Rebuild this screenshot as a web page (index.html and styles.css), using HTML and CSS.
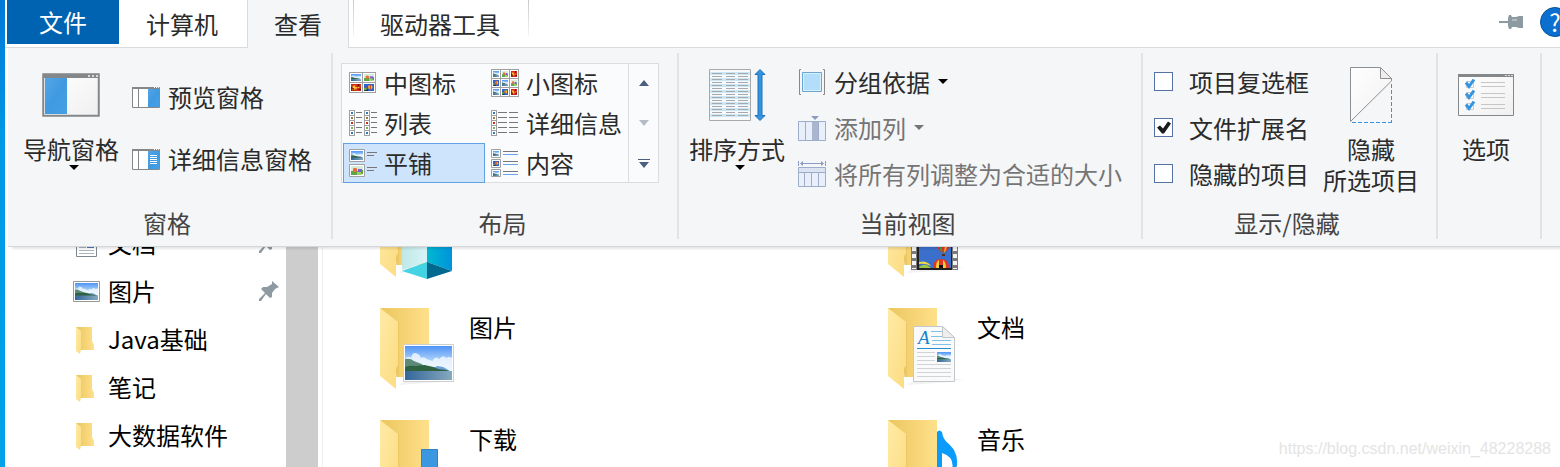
FILE: index.html
```
<!DOCTYPE html>
<html lang="zh-CN">
<head>
<meta charset="utf-8">
<title>文件资源管理器</title>
<link rel="stylesheet" href="styles.css">
</head>
<body>
<svg class="defs" aria-hidden="true">
  <defs>
    <linearGradient id="sky" x1="0" y1="0" x2="0" y2="1"><stop offset="0" stop-color="#4f94f5"/><stop offset=".6" stop-color="#d3ebfc"/><stop offset="1" stop-color="#e8f5fc"/></linearGradient>
    <linearGradient id="sea" x1="0" y1="0" x2="1" y2="0"><stop offset="0" stop-color="#34669b"/><stop offset="1" stop-color="#86a9bd"/></linearGradient>
    <linearGradient id="blue" x1="0" y1="0" x2="1" y2="1"><stop offset="0" stop-color="#55a5e6"/><stop offset=".5" stop-color="#3f9ae1"/><stop offset="1" stop-color="#47a0e5"/></linearGradient>
    <linearGradient id="paper" x1="0" y1="0" x2="1" y2="1"><stop offset="0" stop-color="#fff"/><stop offset="1" stop-color="#f0f0f0"/></linearGradient>
    <linearGradient id="back" x1="0" y1="0" x2="1" y2="0"><stop offset="0" stop-color="#ebc65f"/><stop offset="1" stop-color="#ffe08a"/></linearGradient>
    <linearGradient id="front" x1="0" y1="0" x2="1" y2="1"><stop offset="0" stop-color="#ffeaa6"/><stop offset="1" stop-color="#fbdc80"/></linearGradient>
    <linearGradient id="cubeR" x1="0" y1="0" x2="1" y2="0"><stop offset="0" stop-color="#00b8cf"/><stop offset="1" stop-color="#0093dc"/></linearGradient>
    <linearGradient id="cubeL" x1="0" y1="0" x2="1" y2="0"><stop offset="0" stop-color="#bfe9e6"/><stop offset="1" stop-color="#d8f3f8"/></linearGradient>
    <symbol id="photo" viewBox="0 0 48 34" preserveAspectRatio="none">
      <path fill="url(#sky)" d="M0 0h48v34H0z"/>
      <path fill="#eef7fe" d="M0 13q3-4 6-1 2-7 7-4 3 1 3 4 4-2 6 1 3 1 6 2 3-6 7-2 4-5 7-1 3-2 6 0v13H0z" opacity=".85"/>
      <path fill="#6b9fd8" d="M24 24l9-4 6 1 7 4z"/>
      <path fill="#5c8a78" d="M0 13q6-1 9 2l8 3 5 4 8 3H0z"/>
      <path fill="#2f6240" d="M0 21q6-2 11-1l9-1 9 2 5 2 8 1 6 2H0z"/>
      <path fill="url(#sea)" d="M0 25h48v9H0z"/>
    </symbol>
    <symbol id="flower" viewBox="0 0 12 9" preserveAspectRatio="none">
      <path fill="#d8ecdc" d="M0 0h12v9H0z"/><path fill="#5aa845" d="M0 5h7v4H0zM9 4h3v4H9z"/><circle cx="4" cy="4" r="2.2" fill="#ef6a35"/><path fill="#7a62cf" d="M7 3h4v3H7z"/><path fill="#9bd169" d="M6 6h4v3H6z"/>
    </symbol>
    <symbol id="leaf" viewBox="0 0 12 9" preserveAspectRatio="none">
      <path fill="#d3301b" d="M0 0h12v9H0z"/><path fill="#7c0f09" d="M0 4h2v2h2v3H0zM8 0h2v3H8zM9 6h3v2H9z"/><path fill="#ffc934" d="M3 2h2v2h2v2H5v2H4V5H2V3h1zM8 4h2v1H8zM1 7h2v1H1z"/>
    </symbol>
    <symbol id="balloon" viewBox="0 0 12 9" preserveAspectRatio="none">
      <path fill="#2e62cf" d="M0 0h12v9H0z"/><path fill="#13234c" d="M0 7h5v2H0z"/><circle cx="7.5" cy="4" r="2.8" fill="#f3b92b"/><path fill="#cf2a1d" d="M7 1h1v6H7zM3 4h2v2H3z"/><path fill="#6cae31" d="M0 5h3v3H0z"/>
    </symbol>
    <symbol id="folder" viewBox="0 0 80 84">
      <path d="M18 78l12-6h46l-12 3z" fill="#000" opacity=".05"/>
      <path fill="url(#back)" d="M0 1h49v69H17z"/>
      <path fill="#e5be58" d="M18 16v43l-2 3v8h3V16z" opacity=".5"/>
      <path fill="url(#front)" d="M0 1l18 14v43l-2 3v21L0 69z"/>
    </symbol>
    <symbol id="small-folder" viewBox="0 0 28 28">
      <path fill="url(#back)" d="M4 1h16v14l2 4v5H8z"/>
      <path fill="url(#front)" d="M4 1l5 4v18l-1 5-4-3z"/>
    </symbol>
    <symbol id="pin" viewBox="0 0 20 20"><path fill="#8e9aa2" d="M13 0l7 6-2 1-2 1-3 4 0 4-2 1-4-4-5 7-2 0 0-2 6-6-4-4 2-2h4l5-3z"/></symbol>
    <symbol id="down" viewBox="0 0 10 5"><path d="M0 0h10L5 5z" fill="currentColor"/></symbol>
  </defs>
</svg>
<div class="desktop"></div>
<div class="window">
  <nav class="tabs">
    <button class="tab tab-file">文件</button>
    <button class="tab">计算机</button>
    <button class="tab tab-active">查看</button>
    <button class="tab tab-tools">驱动器工具</button>
    <div class="tab-actions">
      <button class="plain" aria-label="固定功能区"><svg width="24" height="14" viewBox="0 0 24 14"><path fill="#8e9aa2" d="M0 6h9V3l1-3h2l1 2h4l3-1h4v12h-4l-3-1h-4l-1 2h-2l-1-3V8H0z"/><path fill="#b4bcc1" d="M13 4h5v2h-5z"/></svg></button>
      <button class="help" aria-label="帮助">?</button>
    </div>
  </nav>

  <section class="ribbon">
    <div class="group pane-group">
      <div class="group-body">
        <button class="big">
          <span class="big-icon"><svg width="58" height="44" viewBox="0 0 58 44"><path fill="#fff" stroke="#aaa" d="M.5.5h57v43H.5z"/><path fill="url(#paper)" stroke="#85888b" stroke-width="1.5" d="M1.5 1.5h55v41h-55z"/><path fill="#85888b" d="M1 1h56v4H1z"/><path fill="#d9dadb" d="M46 2h2v2h-2zM50 2h2v2h-2zM54 2h2v2h-2z"/><path fill="url(#blue)" d="M3 5h22v36H3z"/></svg></span>
          <span class="big-label">导航窗格</span>
          <svg class="big-arrow" width="10" height="5"><use href="#down"/></svg>
        </button>
        <div class="rows rows-tall">
          <button class="row"><svg width="28" height="21" viewBox="0 0 28 21"><path fill="#fff" stroke="#85888b" d="M.5.5h27v20H.5z"/><path fill="#85888b" d="M0 0h28v2H0zM6 2h1v18H6z"/><path fill="#fff" d="M22 0h1v1h-1zM24 0h1v1h-1zM26 0h1v1h-1z"/><path fill="url(#blue)" d="M16 2h11v18H16z"/></svg>预览窗格</button>
          <button class="row"><svg width="28" height="21" viewBox="0 0 28 21"><path fill="#fff" stroke="#85888b" d="M.5.5h27v20H.5z"/><path fill="#85888b" d="M0 0h28v2H0zM6 2h1v18H6z"/><path fill="#fff" d="M22 0h1v1h-1zM24 0h1v1h-1zM26 0h1v1h-1z"/><path fill="url(#blue)" d="M16 2h11v18H16z"/><path fill="#fff" d="M18 6h7v1h-7zM18 8h7v1h-7zM18 10h7v1h-7zM18 12h7v1h-7zM18 14h7v1h-7z"/></svg>详细信息窗格</button>
        </div>
      </div>
      <div class="group-name">窗格</div>
    </div>

    <div class="group layout-group">
      <div class="group-body">
        <div class="gallery">
          <div class="gallery-list">
            <button class="view"><svg width="28" height="28" viewBox="0 0 28 28"><path fill="#a0a0a0" d="M0 3h27v21H0z"/><path fill="#fff" d="M1 4h12v9H1zM14 4h12v9H14zM1 14h12v9H1zM14 14h12v9H14z"/><use href="#photo" x="2" y="5" width="10" height="7"/><use href="#flower" x="15" y="5" width="10" height="7"/><use href="#leaf" x="2" y="15" width="10" height="7"/><use href="#balloon" x="15" y="15" width="10" height="7"/></svg>中图标</button>
            <button class="view"><svg width="28" height="28" viewBox="0 0 28 28"><path fill="#a0a0a0" d="M0 0h28v28H0z"/><path fill="#fff" d="M1 1h8v8H1zM10 1h8v8h-8zM19 1h8v8h-8zM1 10h8v8H1zM10 10h8v8h-8zM19 10h8v8h-8zM1 19h8v8H1zM10 19h8v8h-8zM19 19h8v8h-8z"/><use href="#photo" x="2" y="2" width="6" height="6"/><use href="#flower" x="11" y="2" width="6" height="6"/><use href="#leaf" x="20" y="2" width="6" height="6"/><use href="#balloon" x="2" y="11" width="6" height="6"/><use href="#photo" x="11" y="11" width="6" height="6"/><use href="#flower" x="20" y="11" width="6" height="6"/><use href="#photo" x="2" y="20" width="6" height="6"/><use href="#balloon" x="11" y="20" width="6" height="6"/><use href="#leaf" x="20" y="20" width="6" height="6"/></svg>小图标</button>
            <button class="view"><svg width="28" height="28" viewBox="0 0 28 28"><path fill="#a0a0a0" d="M0 1h6v26H0zM15 1h6v26h-6z"/><path fill="#fff" d="M1 2h4v4H1zM1 7h4v4H1zM1 12h4v4H1zM1 17h4v4H1zM1 22h4v4H1zM16 2h4v4h-4zM16 7h4v4h-4zM16 12h4v4h-4zM16 17h4v4h-4zM16 22h4v4h-4z"/><path fill="#347bb5" d="M2 3h2v2H2zM2 23h2v2H2zM17 3h2v2h-2zM17 23h2v2h-2z"/><path fill="#9c7b3e" d="M2 8h2v2H2zM17 8h2v2h-2z"/><path fill="#c9301b" d="M2 13h2v2H2zM17 13h2v2h-2z"/><path fill="#85a967" d="M2 18h2v2H2zM17 18h2v2h-2z"/><path fill="#777" d="M7 3h6v1H7zM7 8h6v1H7zM7 13h6v1H7zM7 18h6v1H7zM7 23h6v1H7zM22 3h6v1h-6zM22 8h6v1h-6zM22 13h6v1h-6zM22 18h6v1h-6zM22 23h6v1h-6z"/></svg>列表</button>
            <button class="view"><svg width="28" height="28" viewBox="0 0 28 28"><path fill="#a0a0a0" d="M0 1h6v26H0z"/><path fill="#fff" d="M1 2h4v4H1zM1 7h4v4H1zM1 12h4v4H1zM1 17h4v4H1zM1 22h4v4H1z"/><path fill="#347bb5" d="M2 3h2v2H2zM2 23h2v2H2z"/><path fill="#9c7b3e" d="M2 8h2v2H2z"/><path fill="#c9301b" d="M2 13h2v2H2z"/><path fill="#85a967" d="M2 18h2v2H2z"/><path fill="#777" d="M7 3h9v1H7zM7 8h9v1H7zM7 13h9v1H7zM7 18h9v1H7zM7 23h9v1H7zM18 3h9v1h-9zM18 8h9v1h-9zM18 13h9v1h-9zM18 18h9v1h-9zM18 23h9v1h-9z"/></svg>详细信息</button>
            <button class="view view-selected" aria-pressed="true"><svg width="28" height="28" viewBox="0 0 28 28"><path fill="#fff" stroke="#a0a0a0" d="M.5.5h15v12H.5zM.5 15.500h15v12H.5z"/><use href="#photo" x="2" y="2" width="12" height="9"/><use href="#flower" x="2" y="17" width="12" height="9"/><path fill="#777" d="M18 3h10v1H18zM18 6h7v1h-7zM18 18h10v1H18zM18 21h7v1h-7z"/></svg>平铺</button>
            <button class="view"><svg width="28" height="28" viewBox="0 0 28 28"><path fill="#fff" stroke="#a0a0a0" d="M.5.5h9v8H.5zM.5 10.500h9v8H.5zM.5 20.500h9v7H.5z"/><use href="#photo" x="2" y="2" width="6" height="5"/><use href="#balloon" x="2" y="12" width="6" height="5"/><use href="#photo" x="2" y="22" width="6" height="5"/><path fill="#777" d="M12 2h15v1H12zM12 12h15v1H12zM12 22h15v1H12z"/><path fill="#6ba2e8" d="M12 5h15v1H12zM12 15h15v1H12zM12 25h15v1H12z"/></svg>内容</button>
          </div>
          <div class="gallery-scroll">
            <button class="plain" aria-label="上一行"><svg width="10" height="6"><path fill="#4b5f80" d="M0 6h10L5 0z"/></svg></button>
            <button class="plain" aria-label="下一行" disabled><svg width="10" height="6"><path fill="#b5bcc6" d="M0 0h10L5 6z"/></svg></button>
            <button class="plain" aria-label="更多"><svg width="12" height="9"><path fill="#4b5f80" d="M0 0h12v1H0zM1 3h10L6 9z"/></svg></button>
          </div>
        </div>
      </div>
      <div class="group-name">布局</div>
    </div>

    <div class="group current-group">
      <div class="group-body">
        <button class="big">
          <span class="big-icon"><svg width="58" height="54" viewBox="0 0 58 54"><path fill="#f7f9fa" stroke="#a9a9a9" d="M1.500 1.500h41v51h-41z"/><path fill="#cbe7f5" d="M2 4h40v3H2zM2 10h40v3H2zM2 16h40v3H2zM2 22h40v3H2zM2 28h40v3H2zM2 34h40v3H2zM2 40h40v3H2zM2 46h40v3H2z"/><path fill="none" stroke="#a9a9ab" stroke-dasharray="10 4 9 3 10 9" d="M4 5.500h36M4 8.500h36M4 11.500h36M4 14.500h36M4 17.500h36M4 20.500h36M4 23.500h36M4 26.500h36M4 29.500h36M4 32.500h36M4 35.500h36M4 38.500h36M4 41.500h36M4 44.500h36M4 47.500h36"/><path fill="#3395e2" stroke="#2371b5" d="M52 1.500l5 5h-3v41h3l-5 5-5-5h3v-41h-3z"/></svg></span>
          <span class="big-label">排序方式</span>
          <svg class="big-arrow" width="10" height="5"><use href="#down"/></svg>
        </button>
        <div class="rows">
          <button class="row"><svg width="28" height="28" viewBox="0 0 28 28"><path fill="none" stroke="#888" d="M3 1.500H1.500v25H3M25 1.500h1.500v25H25"/><path fill="#b3defb" stroke="#6ca6d3" d="M4.500 4.500h19v19h-19z"/><path fill="none" stroke="#d8effd" d="M5.500 5.500h17v17h-17z"/></svg>分组依据<svg class="row-arrow" width="10" height="5"><use href="#down"/></svg></button>
          <button class="row" disabled><svg width="28" height="28" viewBox="0 0 28 28"><path fill="#e9effa" stroke="#9eadca" d="M.5 7.500h27v19H.5zM7.500 7.500v19M14.500 7.500v19M20.500 7.500v19"/><path fill="#a9b6ce" d="M14 8h6v18h-6z"/><path fill="#8b9cc2" d="M13 2h8l-4 4z"/></svg>添加列<svg class="row-arrow" width="10" height="5"><use href="#down"/></svg></button>
          <button class="row" disabled><svg width="28" height="28" viewBox="0 0 28 28"><path fill="#e9effa" stroke="#9eadca" d="M.5 7.500h27v19H.5zM.5 12.500h27M6.500 12.500v14M13.500 12.500v14M20.500 12.500v14"/><path fill="#dbe4f0" d="M1 8h26v4H1z"/><path fill="none" stroke="#8b9cc2" d="M.5 1v5M27.500 1v5M3 3.500h22"/><path fill="#8b9cc2" d="M2 3.500L5 1v5zM26 3.500L23 1v5z"/></svg>将所有列调整为合适的大小</button>
        </div>
      </div>
      <div class="group-name">当前视图</div>
    </div>

    <div class="group show-group">
      <div class="group-body">
        <div class="rows">
          <label class="row check"><input type="checkbox">项目复选框</label>
          <label class="row check"><input type="checkbox" checked>文件扩展名</label>
          <label class="row check"><input type="checkbox">隐藏的项目</label>
        </div>
        <button class="big">
          <span class="big-icon"><svg width="44" height="58" viewBox="0 0 44 58"><path fill="url(#paper)" d="M1 1h30l12 11v4L1 57z"/><path fill="#eee" stroke="#8d8f91" d="M31.500 1.500l11 11h-11z"/><path fill="none" stroke="#8d8f91" d="M31 1.500H1.500v54L42.500 15v-3"/><path fill="none" stroke="#3694e2" stroke-dasharray="4 2" d="M42.500 18v39M3 56.500h40"/></svg></span>
          <span class="big-label">隐藏<br>所选项目</span>
        </button>
      </div>
      <div class="group-name">显示/隐藏</div>
    </div>

    <div class="group options-group">
      <div class="group-body">
        <button class="big">
          <span class="big-icon"><svg width="56" height="42" viewBox="0 0 56 42"><path fill="url(#paper)" stroke="#85888b" d="M.5.5h55v41H.5z"/><path fill="#85888b" d="M0 0h56v3H0z"/><path fill="#ddd" d="M47 1h2v1h-2zM50 1h2v1h-2zM53 1h2v1h-2z"/><path fill="#fff" stroke="#ccc" d="M8.500 7.500h7v6h-7zM8.500 18.500h7v6h-7zM8.500 29.500h7v6h-7z"/><path fill="none" stroke="#3395e2" stroke-width="3" d="M8 8.500l3 4 5-7M8 19.500l3 4 5-7M8 30.500l3 4 5-7"/><path fill="#c6c6c6" d="M23 8h24v1H23zM23 12h24v1H23zM23 19h24v1H23zM23 23h24v1H23zM23 30h24v1H23zM23 34h24v1H23z"/></svg></span>
          <span class="big-label">选项</span>
        </button>
      </div>
    </div>
  </section>

  <main class="explorer">
    <nav class="sidebar">
      <a class="place" href="#"><svg width="28" height="28" viewBox="0 0 28 28"><path fill="#fff" stroke="#7f8791" d="M4.500.5h20v26h-20z"/><path fill="#aab4be" d="M7 20h15v1H7zM7 23h15v1H7z"/><path fill="#4a78b5" d="M15 14h7v4h-7z"/><path fill="#aab4be" d="M7 17h7v1H7z"/></svg><span>文档</span><svg class="place-pin" width="20" height="20"><use href="#pin"/></svg></a>
      <a class="place" href="#"><svg width="28" height="28" viewBox="0 0 28 28"><path fill="#fff" stroke="#989898" d="M1.500 3.500h26v20h-26z"/><use href="#photo" x="3" y="5" width="23" height="17"/></svg><span>图片</span><svg class="place-pin" width="20" height="20"><use href="#pin"/></svg></a>
      <a class="place" href="#"><svg width="28" height="28"><use href="#small-folder"/></svg><span>Java基础</span></a>
      <a class="place" href="#"><svg width="28" height="28"><use href="#small-folder"/></svg><span>笔记</span></a>
      <a class="place" href="#"><svg width="28" height="28"><use href="#small-folder"/></svg><span>大数据软件</span></a>
    </nav>
    <div class="scrollbar"></div>
    <div class="files">
      <a class="file" href="#"><svg width="80" height="84" viewBox="0 0 80 84"><use href="#folder"/><path fill="url(#cubeL)" d="M22 30h25v37l-25 8z"/><path fill="url(#cubeR)" d="M47 30h25v46l-25-9z"/><path fill="#43d3e3" d="M22 76l25-9v17z"/><path fill="#00698f" d="M47 67l25 9-25 8z"/></svg></a>
      <a class="file" href="#"><svg width="80" height="84" viewBox="0 0 80 84"><use href="#folder"/><path fill="#7a7a7a" d="M23 30h47v45H23z"/><path fill="#222" d="M29 30h35v45H29z"/><path fill="#3a70cc" d="M31 32h32v41H31z"/><path fill="none" stroke="#f4f4f4" stroke-width="4" stroke-dasharray="4 3" d="M26 38v36M67 38v36"/><path fill="#e0332a" d="M49 50h12q1 5-6 8-6-3-6-8z"/><path fill="#3c9a47" d="M51 50h2l2 8q-4-3-4-8z"/><path fill="#f4b825" d="M57 50h2q0 5-3 8z"/><path fill="#5b2b1d" d="M54 59h3v2h-3z"/><path fill="#e2352a" d="M45 73c0-5 2-9 8-9s8 4 8 9z"/><path fill="#f7ce38" d="M48 73c0-5 1-7 3-8v8zM55 65q3 2 3 8h-3z"/><path fill="#111" d="M51 70h4v3h-4z"/><path fill="#9fc545" d="M31 73q2-4 8-3l4 3z"/><path fill="#f0d545" d="M31 67q8-2 12 4-6-3-12-2z"/></svg></a>
      <a class="file" href="#"><svg width="80" height="84" viewBox="0 0 80 84"><use href="#folder"/><path fill="#fff" stroke="#cfcfcf" d="M23.500 37.500h50v37h-50z"/><use href="#photo" x="25" y="39" width="47" height="34"/></svg><span>图片</span></a>
      <a class="file" href="#"><svg width="80" height="84" viewBox="0 0 80 84"><use href="#folder"/><path fill="#fafafa" stroke="#c4c7ca" d="M25.500 19.500h29l12 11v44h-41z"/><path fill="#eee" stroke="#c4c7ca" d="M54.500 19.500v11h12z"/><text class="doc-letter" x="30" y="37">A</text><path fill="#7fc1ea" d="M43 24h11v1H43zM43 29h11v1H43zM44 33h19v1H44zM44 37h19v1H44z"/><path fill="#2590cf" d="M29 41h34v1H29z"/><path fill="#d0d4d7" d="M29 45h18v1H29zM29 49h18v1H29zM29 53h18v1H29zM29 57h34v1H29zM29 61h34v1H29zM29 65h34v1H29zM29 69h34v1H29z"/><use href="#photo" x="49" y="45" width="14" height="10"/></svg><span>文档</span></a>
      <a class="file" href="#"><svg width="80" height="84" viewBox="0 0 80 84"><use href="#folder"/><path fill="#3b97e0" stroke="#2f82c8" d="M41.500 30.500h16v40h-16z"/></svg><span>下载</span></a>
      <a class="file" href="#"><svg width="80" height="84" viewBox="0 0 80 84"><use href="#folder"/><path fill="#0a9bfb" d="M49 13q2-3 5 0c1 10 8 11 12 18q5 9 2 20h-4q3-13-10-17v35h-5z"/></svg><span>音乐</span></a>
    </div>
    <div class="watermark">https://blog.csdn.net/weixin_48228288</div>
  </main>
</div>
</body>
</html>
```
FILE: styles.css
```
* { box-sizing: border-box; }

body {
  margin: 0;
  display: flex;
  height: 100vh;
  overflow: hidden;
  background: #fff;
  color: #2b2b2b;
  font: 24px/31px "Noto Sans CJK SC", sans-serif;
}

button {
  margin: 0;
  padding: 0;
  border: 0;
  background: none;
  color: inherit;
  font: inherit;
}

a { color: inherit; text-decoration: none; }
svg { display: block; flex: none; }
.defs { position: absolute; width: 0; height: 0; }

.desktop { flex: none; width: 5px; background: linear-gradient(#0078d7, #0099e5 30%, #00a2e8); }

.window { flex: 1; min-width: 0; display: flex; flex-direction: column; }

/* Tab strip */
.tabs {
  display: flex;
  flex: none;
  height: 48px;
  padding-left: 2px;
  background: linear-gradient(#dadbdc, #dadbdc) bottom / 100% 1px no-repeat;
  overflow: hidden;
}
.tab { flex: none; padding: 0 29px 0 27px; line-height: 44px; white-space: nowrap; }
.tab-file { align-self: flex-start; padding: 0 32px; background: #0063b1; color: #fff; }
.tab-active {
  padding: 0 26px;
  border: solid #dadbdc;
  border-width: 0 1px;
  background: #f5f6f7;
}
.tab-tools {
  margin-left: 4px;
  padding: 0 29px 0 27px;
  background:
    linear-gradient(#c8c9ca, #f4f4f4) left top / 1px 36px no-repeat,
    linear-gradient(#c8c9ca, #f4f4f4) right top / 1px 36px no-repeat;
}
.tab-actions { display: flex; align-items: center; gap: 17px; height: 43px; margin-left: auto; margin-right: -10px; }
.help {
  width: 30px;
  height: 30px;
  border: 1px solid #04549c;
  border-radius: 50%;
  background: #0a6fce;
  color: #fff;
  font-size: 24px;
  line-height: 26px;
}

/* Ribbon */
.ribbon {
  position: relative;
  z-index: 1;
  display: flex;
  flex: none;
  margin-left: 3px;
  padding: 5px 0 7px;
  border-bottom: 1px solid #d5d6d7;
  background: #f5f6f7;
  box-shadow: 4px 2px 2px rgba(0, 0, 0, .1);
}
.group { flex: none; display: flex; flex-direction: column; border-right: 2px solid #e2e3e4; }
.group-body { display: flex; height: 154px; }
.group-name { padding: 0 5px 1px 0; color: #444; text-align: center; }
.pane-group .group-body { gap: 13px; padding: 0 19px 0 15px; }
.layout-group .group-body { padding: 10px 18px 0 8px; }
.current-group .group-body { gap: 13px; padding: 0 19px 0 10px; }
.show-group .group-body { gap: 14px; padding: 0 17px 0 11px; }
.options-group .group-body { padding: 0 26px 0 20px; }

.big { display: flex; flex-direction: column; align-items: center; justify-content: flex-start; padding-top: 12px; }
.big-icon { display: flex; align-items: center; height: 60px; margin-bottom: 8px; }
.big-arrow { margin: 1px 0 0 6px; color: #000; }

.rows { display: flex; flex-direction: column; padding-top: 5px; }
.row { display: flex; align-items: center; gap: 8px; height: 46px; white-space: nowrap; }
.row > svg:first-child { margin-top: 2px; }
.row-arrow { color: #000; }
.row:disabled, .row:disabled .row-arrow { color: #757575; }
.rows-tall { padding-top: 12px; }
.rows-tall .row { height: 62px; }

.check { gap: 16px; }
.check input {
  appearance: none;
  width: 19px;
  height: 19px;
  margin: 0;
  border: 1px solid #5472a6;
  background: #fff;
}
.check input:checked::before {
  content: "";
  display: block;
  height: 17px;
  background: #1b1b1b;
  clip-path: polygon(2px 9px, 5px 7px, 8px 10px, 13px 3px, 16px 5px, 9px 15px, 7px 15px);
}

/* Layout gallery */
.gallery {
  display: flex;
  height: 120px;
  border: solid #dcddde;
  border-width: 0 1px;
  background: #fafbfd;
  box-shadow: inset 0 1px #dcddde, inset 0 -1px #dcddde;
}
.gallery-list { display: grid; grid-template-columns: 142px 142px; grid-auto-rows: 40px; padding: 0 1px; }
.view {
  display: flex;
  align-items: center;
  gap: 7px;
  padding: 0 0 2px 5px;
  border: 1px solid transparent;
  white-space: nowrap;
}
.view svg { margin-top: 2px; }
.view-selected { border-color: #62a2e4; background: #cde4fc; }
.gallery-scroll { display: grid; grid-auto-rows: 40px; width: 30px; border-left: 1px solid #dcddde; }
.gallery-scroll .plain { display: flex; align-items: center; justify-content: center; }

/* Explorer body */
.explorer { position: relative; display: flex; flex: 1; min-height: 0; overflow: hidden; }
.sidebar { flex: none; width: 281px; margin-top: -27px; color: #000; }
.place { display: flex; align-items: center; gap: 8px; height: 48px; padding: 0 7px 0 67px; }
.place span { padding-bottom: 4px; }
.place-pin { margin: 0 0 2px auto; }
.scrollbar { flex: none; width: 32px; margin-right: 4px; background: #cdcdcd; }
.files {
  flex: 1;
  display: grid;
  grid-template-columns: 508px 1fr;
  grid-auto-rows: 112px;
  height: 448px;
  margin-top: -52px;
  padding-left: 57px;
  border-left: 1px solid #eee;
  color: #000;
}
.file { display: flex; align-items: flex-start; gap: 9px; line-height: 39px; }
.doc-letter { fill: #1683cb; font: italic 19px "Liberation Serif", serif; }
.watermark {
  position: absolute;
  right: 9px;
  bottom: 8px;
  color: #e4e4e4;
  font: 16px/20px "Liberation Sans", sans-serif;
}
```
